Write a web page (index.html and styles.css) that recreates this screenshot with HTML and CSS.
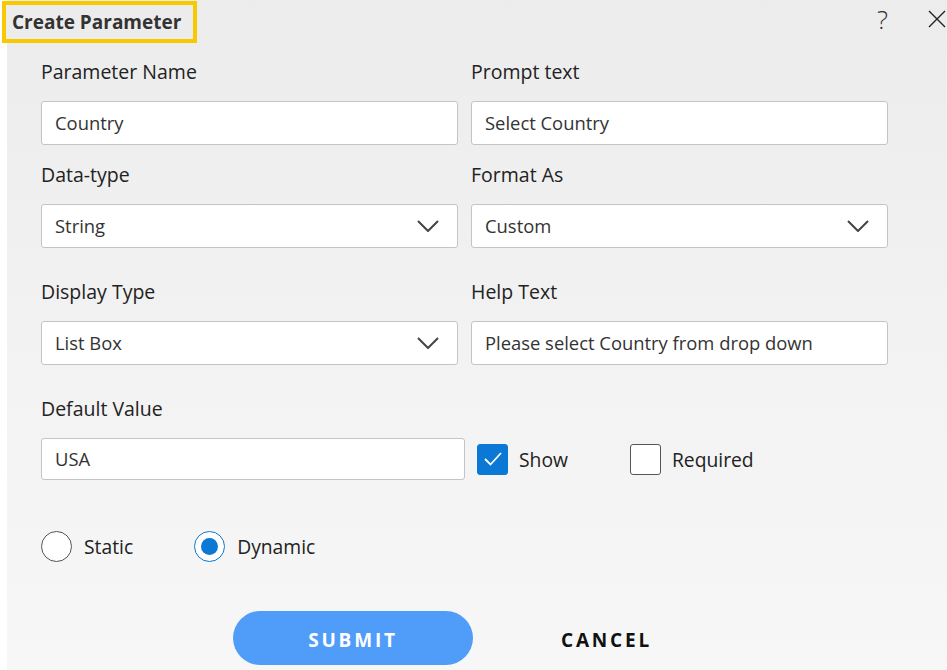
FILE: index.html
```html
<!DOCTYPE html>
<html>
<head>
  <meta charset="utf-8">
  <title>Create Parameter</title>
  <link rel="stylesheet" href="styles.css">
</head>
<body>
  <div class="dialog">
    <div class="dialog-head">
      <h1 class="title">Create Parameter</h1>
      <div class="head-actions">
        <span class="help">?</span>
        <svg class="close" width="18" height="18" viewBox="0 0 18 18">
          <path d="M1 1 L17 17 M17 1 L1 17" stroke="#222" stroke-width="1.4" fill="none"/>
        </svg>
      </div>
    </div>

    <div class="form">
      <div class="field">
        <label>Parameter Name</label>
        <div class="box">Country</div>
      </div>
      <div class="field">
        <label>Prompt text</label>
        <div class="box">Select Country</div>
      </div>

      <div class="field">
        <label>Data-type</label>
        <div class="box select">String
          <svg width="22" height="12" viewBox="0 0 22 12"><path d="M1 1 L11 11 L21 1" stroke="#444" stroke-width="2" fill="none"/></svg>
        </div>
      </div>
      <div class="field">
        <label>Format As</label>
        <div class="box select">Custom
          <svg width="22" height="12" viewBox="0 0 22 12"><path d="M1 1 L11 11 L21 1" stroke="#444" stroke-width="2" fill="none"/></svg>
        </div>
      </div>

      <div class="field gap-top">
        <label>Display Type</label>
        <div class="box select">List Box
          <svg width="22" height="12" viewBox="0 0 22 12"><path d="M1 1 L11 11 L21 1" stroke="#444" stroke-width="2" fill="none"/></svg>
        </div>
      </div>
      <div class="field gap-top">
        <label>Help Text</label>
        <div class="box">Please select Country from drop down</div>
      </div>
    </div>

    <div class="default-row">
      <label>Default Value</label>
      <div class="default-line">
        <div class="box wide">USA</div>
        <div class="check on">
          <span class="tick">
            <svg width="20" height="16" viewBox="0 0 20 16"><path d="M2 8 L7.5 13.5 L18 2" stroke="#fff" stroke-width="1.8" fill="none"/></svg>
          </span>
          Show
        </div>
        <div class="check">
          <span class="tick"></span>
          Required
        </div>
      </div>
    </div>

    <div class="radios">
      <div class="radio"><span class="dot"></span>Static</div>
      <div class="radio on"><span class="dot"></span>Dynamic</div>
    </div>

    <div class="buttons">
      <button class="submit">SUBMIT</button>
      <button class="cancel">CANCEL</button>
    </div>
  </div>
</body>
</html>
```

FILE: styles.css
```css
* {
  margin: 0;
  padding: 0;
  box-sizing: border-box;
}
body {
  background: #fff;
  font-family: "Open Sans", "Noto Sans", sans-serif;
  color: #222;
  width: 947px;
  height: 670px;
  overflow: hidden;
}
.dialog {
  margin-left: 7px;
  height: 670px;
  background: linear-gradient(180deg, #ececec 0%, #f2f2f2 50%, #f7f7f7 100%);
  position: relative;
}
.dialog-head {
  display: flex;
  justify-content: space-between;
  align-items: flex-start;
  height: 43px;
}
.title {
  margin-left: -5px;
  margin-top: 1px;
  border: 4px solid #f8c800;
  height: 42px;
  width: 195px;
  font-size: 19px;
  font-weight: 700;
  color: #333;
  line-height: 34px;
  padding-left: 6px;
  background: #ececec;
  white-space: nowrap;
}
.head-actions {
  display: flex;
  align-items: center;
  gap: 40px;
  padding-top: 6px;
}
.help {
  font-size: 26px;
  font-weight: 300;
  line-height: 26px;
  color: #333;
}
.close {
  margin-right: 1px;
}
.form {
  display: grid;
  grid-template-columns: 417px 417px;
  column-gap: 13px;
  padding-left: 34px;
  margin-top: 14px;
}
.field label,
.default-row label {
  display: block;
  font-size: 19.5px;
  line-height: 30px;
  height: 44px;
  color: #222;
}
.field {
  margin-bottom: 15px;
}
.gap-top {
  margin-top: 14px;
}
.box {
  height: 44px;
  background: #fff;
  border: 1px solid #c4c4c4;
  border-radius: 3px;
  font-size: 18.4px;
  line-height: 42px;
  padding-left: 13px;
  color: #333;
}
.select {
  display: flex;
  justify-content: space-between;
  align-items: center;
  padding-right: 18px;
}
.default-row {
  padding-left: 34px;
  margin-top: 14px;
}
.default-line {
  display: flex;
  align-items: center;
}
.box.wide {
  width: 424px;
  height: 42px;
  line-height: 40px;
}
.check {
  display: flex;
  align-items: center;
  font-size: 19.3px;
  color: #222;
}
.check .tick {
  width: 31px;
  height: 31px;
  border: 1px solid #555;
  border-radius: 3px;
  background: #fff;
  margin-right: 11px;
  display: flex;
  align-items: center;
  justify-content: center;
}
.check.on {
  margin-left: 12px;
  margin-right: 62px;
}
.check.on .tick {
  background: #0a78d4;
  border-color: #0a78d4;
}
.radios {
  display: flex;
  padding-left: 34px;
  margin-top: 51px;
  gap: 61px;
}
.radio {
  display: flex;
  align-items: center;
  font-size: 19.3px;
  color: #222;
}
.radio .dot {
  width: 31px;
  height: 31px;
  border: 1px solid #555;
  border-radius: 50%;
  background: #fff;
  margin-right: 12px;
  position: relative;
}
.radio.on .dot {
  border-color: #0a78d4;
}
.radio.on .dot::after {
  content: "";
  position: absolute;
  left: 6px;
  top: 6px;
  width: 17px;
  height: 17px;
  border-radius: 50%;
  background: #0a78d4;
}
.buttons {
  display: flex;
  align-items: center;
  padding-left: 226px;
  margin-top: 49px;
}
button {
  border: 0;
  outline: 0;
  font-family: "Open Sans", "Noto Sans", sans-serif;
  font-weight: 700;
  font-size: 19px;
  letter-spacing: 2.8px;
  cursor: pointer;
}
.submit {
  width: 240px;
  height: 54px;
  border-radius: 27px;
  background: #4f9cf9;
  color: #fff;
  padding-top: 3px;
}
.cancel {
  background: none;
  color: #111;
  margin-left: 88px;
  padding-top: 3px;
}
```
